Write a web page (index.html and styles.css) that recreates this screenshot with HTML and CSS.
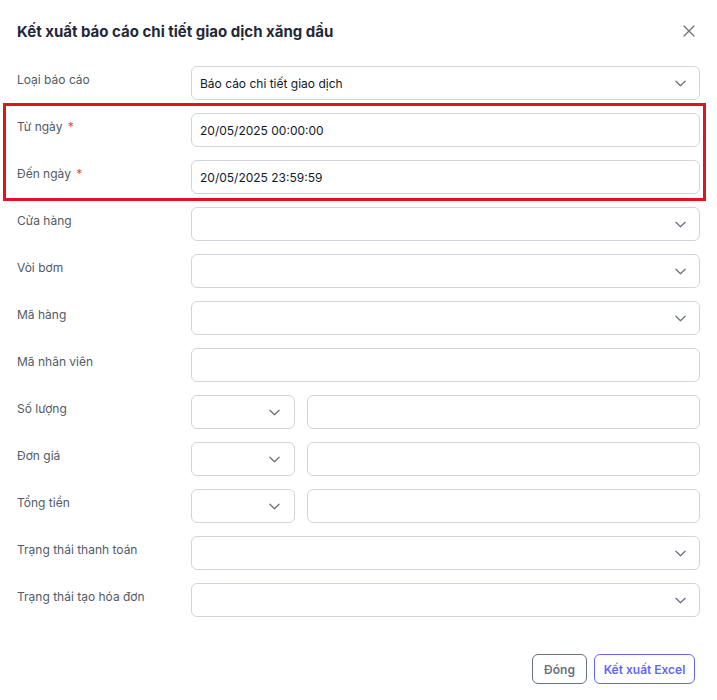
FILE: index.html
```html
<!DOCTYPE html>
<html lang="vi">
<head>
<meta charset="utf-8">
<link rel="stylesheet" href="styles.css">
</head>
<body>
<div class="modal">
  <div class="header">
    <h1 class="title">Kết xuất báo cáo chi tiết giao dịch xăng dầu</h1>
    <button class="close" aria-label="Đóng">
      <svg width="12" height="12" viewBox="0 0 12 12"><path d="M1 1L11 11M11 1L1 11" stroke="#6b7280" stroke-width="1.3" fill="none" stroke-linecap="round"/></svg>
    </button>
  </div>
  <div class="form">
    <div class="label">Loại báo cáo</div>
    <div class="field select"><span>Báo cáo chi tiết giao dịch</span><svg class="chev" viewBox="0 0 12 7"><path d="M1 1L6 6L11 1" /></svg></div>

    <div class="label">Từ ngày <span class="req">*</span></div>
    <div class="field"><span>20/05/2025 00:00:00</span></div>

    <div class="label">Đến ngày <span class="req">*</span></div>
    <div class="field"><span>20/05/2025 23:59:59</span></div>

    <div class="label">Cửa hàng</div>
    <div class="field select"><span></span><svg class="chev" viewBox="0 0 12 7"><path d="M1 1L6 6L11 1" /></svg></div>

    <div class="label">Vòi bơm</div>
    <div class="field select"><span></span><svg class="chev" viewBox="0 0 12 7"><path d="M1 1L6 6L11 1" /></svg></div>

    <div class="label">Mã hàng</div>
    <div class="field select"><span></span><svg class="chev" viewBox="0 0 12 7"><path d="M1 1L6 6L11 1" /></svg></div>

    <div class="label">Mã nhân viên</div>
    <div class="field"><span></span></div>

    <div class="label">Số lượng</div>
    <div class="pair">
      <div class="field select small"><span></span><svg class="chev" viewBox="0 0 12 7"><path d="M1 1L6 6L11 1" /></svg></div>
      <div class="field"><span></span></div>
    </div>

    <div class="label">Đơn giá</div>
    <div class="pair">
      <div class="field select small"><span></span><svg class="chev" viewBox="0 0 12 7"><path d="M1 1L6 6L11 1" /></svg></div>
      <div class="field"><span></span></div>
    </div>

    <div class="label">Tổng tiền</div>
    <div class="pair">
      <div class="field select small"><span></span><svg class="chev" viewBox="0 0 12 7"><path d="M1 1L6 6L11 1" /></svg></div>
      <div class="field"><span></span></div>
    </div>

    <div class="label">Trạng thái thanh toán</div>
    <div class="field select"><span></span><svg class="chev" viewBox="0 0 12 7"><path d="M1 1L6 6L11 1" /></svg></div>

    <div class="label">Trạng thái tạo hóa đơn</div>
    <div class="field select"><span></span><svg class="chev" viewBox="0 0 12 7"><path d="M1 1L6 6L11 1" /></svg></div>
  </div>
  <div class="footer">
    <button class="btn btn-close">Đóng</button>
    <button class="btn btn-export">Kết xuất Excel</button>
  </div>
  <div class="highlight"></div>
</div>
</body>
</html>
```
FILE: styles.css
```css
* { box-sizing: border-box; }
html, body { margin: 0; padding: 0; background: #ffffff; }
body {
  font-family: Inter, "Noto Sans", "Liberation Sans", sans-serif;
  color: #111827;
}
.modal {
  position: relative;
  width: 717px;
  height: 700px;
  padding: 0 17px 0 17px;
  background: #ffffff;
}
.header {
  display: flex;
  align-items: center;
  justify-content: space-between;
  height: 62px;
  padding-top: 1px;
}
.title {
  margin: 0;
  font-size: 15px;
  font-weight: 700;
  color: #1f2937;
}
.close {
  border: 0;
  background: none;
  padding: 0;
  margin-right: 4px;
  width: 14px;
  height: 14px;
  display: flex;
  align-items: center;
  justify-content: center;
  margin-top: -2px;
}
.form {
  margin-top: 4px;
  display: grid;
  grid-template-columns: 174px 509px;
  grid-auto-rows: 34px;
  row-gap: 13px;
}
.label {
  font-size: 12px;
  line-height: 20px;
  color: #525a66;
  padding-top: 4px;
}
.req { color: #ef4444; margin-left: 2px; }
.field {
  height: 34px;
  border: 1px solid #d1d5db;
  border-radius: 6px;
  display: flex;
  align-items: center;
  justify-content: space-between;
  padding: 0 13px 0 8px;
  font-size: 12px;
  color: #111827;
  flex: 1;
  min-width: 0;
}
.chev {
  width: 11px;
  height: 7px;
  fill: none;
  stroke: #6b7280;
  stroke-width: 1.4;
  stroke-linecap: round;
  stroke-linejoin: round;
}
.pair {
  display: flex;
  gap: 12px;
}
.field.small {
  flex: 0 0 104px;
  padding-right: 14px;
}
.footer {
  display: flex;
  justify-content: flex-end;
  gap: 7px;
  margin-top: 37px;
  padding-right: 5px;
}
.btn {
  height: 30px;
  border-radius: 6px;
  background: #ffffff;
  font-family: Inter, "Noto Sans", "Liberation Sans", sans-serif;
  font-size: 12px;
  font-weight: 600;
  padding: 0;
  white-space: nowrap;
}
.btn-close {
  border: 1px solid #6b7280;
  color: #6b7280;
  width: 55px;
}
.btn-export {
  border: 1px solid #6366f1;
  color: #6366f1;
  width: 101px;
}
.highlight {
  position: absolute;
  left: 3px;
  top: 103px;
  width: 703px;
  height: 98px;
  border: 3px solid #e3121f;
  pointer-events: none;
}
```
